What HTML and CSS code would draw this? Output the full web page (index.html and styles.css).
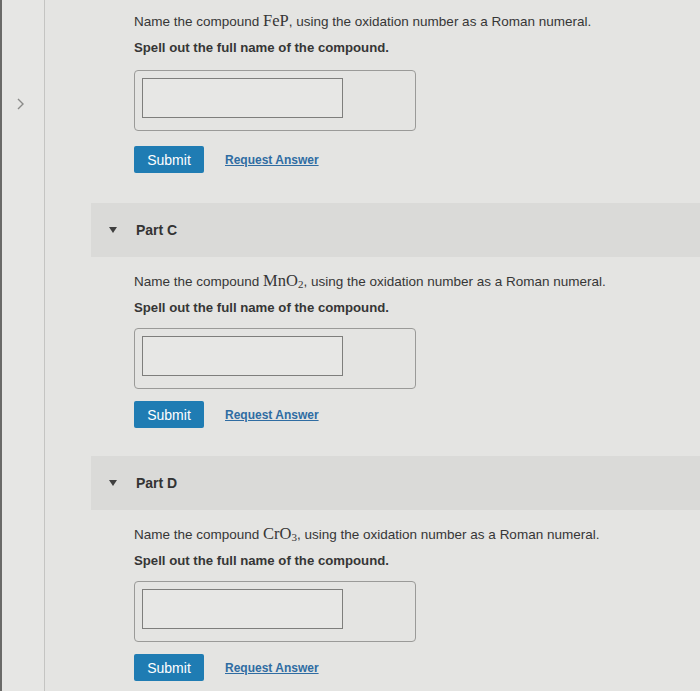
FILE: index.html
```html
<!DOCTYPE html>
<html>
<head>
<meta charset="utf-8">
<link rel="stylesheet" href="styles.css">
</head>
<body>
<div class="page">
  <aside class="sidebar">
    <svg class="chevron" width="10" height="14" viewBox="0 0 10 14"><path d="M2 2 L7 7 L2 12" fill="none" stroke="#8a8a88" stroke-width="1.4"/></svg>
  </aside>
  <main class="main">
    <section class="part">
      <div class="body first">
        <p>Name the compound <span class="math">FeP</span>, using the oxidation number as a Roman numeral.</p>
        <p class="bold">Spell out the full name of the compound.</p>
        <div class="answer-box"><div class="input"></div></div>
        <div class="actions"><span class="btn">Submit</span><a class="link">Request Answer</a></div>
      </div>
    </section>
    <section class="part">
      <div class="band"><span class="tri"></span><span class="title">Part C</span></div>
      <div class="body">
        <p>Name the compound <span class="math">MnO<sub>2</sub></span>, using the oxidation number as a Roman numeral.</p>
        <p class="bold">Spell out the full name of the compound.</p>
        <div class="answer-box"><div class="input"></div></div>
        <div class="actions"><span class="btn">Submit</span><a class="link">Request Answer</a></div>
      </div>
    </section>
    <section class="part">
      <div class="band"><span class="tri"></span><span class="title">Part D</span></div>
      <div class="body">
        <p>Name the compound <span class="math">CrO<sub>3</sub></span>, using the oxidation number as a Roman numeral.</p>
        <p class="bold">Spell out the full name of the compound.</p>
        <div class="answer-box"><div class="input"></div></div>
        <div class="actions"><span class="btn">Submit</span><a class="link">Request Answer</a></div>
      </div>
    </section>
  </main>
</div>
</body>
</html>
```
FILE: styles.css
```css
html, body {
  margin: 0;
  padding: 0;
  background: #e4e4e2;
  font-family: "Liberation Sans", Arial, sans-serif;
  color: #363636;
}
.page {
  display: flex;
  height: 691px;
  overflow: hidden;
}
.sidebar {
  width: 45px;
  flex: none;
  border-left: 2px solid #6a6a68;
  border-right: 1px solid #c4c4c2;
  background: #e6e6e4;
  display: flex;
  justify-content: center;
  padding-top: 97px;
  padding-right: 4px;
  box-sizing: border-box;
}
.chevron { display: block; }
.main {
  flex: 1;
  padding-left: 46px;
}
.body {
  padding-left: 43px;
  padding-top: 14px;
}
.body.first { padding-top: 11px; }
.body p {
  margin: 0 0 6px;
  font-size: 13.5px;
  line-height: 20px;
}
.body p.bold {
  font-weight: bold;
  font-size: 13.2px;
}
.math {
  font-family: "Liberation Serif", "Times New Roman", serif;
  font-size: 16.5px;
}
.math sub {
  font-size: 11px;
  vertical-align: -2px;
  line-height: 0;
}
.answer-box {
  margin-top: 10px;
  border: 1px solid #9a9a98;
  border-radius: 4px;
  padding: 7px;
  box-sizing: content-box;
  width: 266px;
  height: 45px;
}
.first .answer-box { margin-top: 12px; }
.input {
  width: 199px;
  height: 38px;
  border: 1px solid #7e7e7c;
  background: #e7e7e5;
}
.actions {
  margin-top: 12px;
  display: flex;
  align-items: center;
  gap: 21px;
  margin-bottom: 28px;
}
.first .actions {
  margin-top: 15px;
  margin-bottom: 30px;
}
.btn {
  display: inline-flex;
  align-items: center;
  justify-content: center;
  width: 70px;
  height: 27px;
  background: #1f7cb3;
  color: #ffffff;
  font-size: 14px;
  border-radius: 2px;
}
.link {
  color: #2f6ca2;
  font-weight: bold;
  font-size: 12px;
  text-decoration: underline;
}
.band {
  height: 54px;
  background: #dadad8;
  display: flex;
  align-items: center;
  padding-left: 18px;
}
.tri {
  width: 0;
  height: 0;
  border-left: 4.5px solid transparent;
  border-right: 4.5px solid transparent;
  border-top: 6px solid #3f3f3f;
  margin-right: 19px;
}
.title {
  font-size: 14px;
  font-weight: bold;
  color: #333;
}
```
